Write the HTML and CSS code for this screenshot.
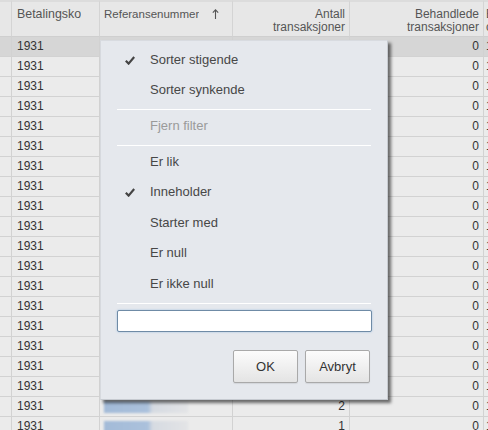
FILE: index.html
```html
<!DOCTYPE html>
<html>
<head>
<meta charset="utf-8">
<link rel="stylesheet" href="styles.css">
</head>
<body>
<div class="wrap">
<div class="grid">
  <div class="row head">
    <div class="h"></div>
    <div class="h left bet"><span class="ht">Betalingskode</span></div>
    <div class="h left ref"><span class="ht small">Referansenummer</span><svg class="arrow" width="7" height="10" viewBox="0 0 7 10"><path d="M3.5 1V10M0.8 3.6L3.5 0.8L6.2 3.6" fill="none" stroke="#555" stroke-width="1.1"/></svg></div>
    <div class="h right">Antall<br>transaksjoner</div>
    <div class="h right">Behandlede<br>transaksjoner</div>
    <div class="h last">Behandlede<br>oppgjør</div>
  </div>
  <div class="row sel"><div class="c"></div><div class="c">1931</div><div class="c"></div><div class="c num">1</div><div class="c num">0</div><div class="c last">1</div></div>
  <div class="row"><div class="c"></div><div class="c">1931</div><div class="c"></div><div class="c num">1</div><div class="c num">0</div><div class="c last">1</div></div>
  <div class="row"><div class="c"></div><div class="c">1931</div><div class="c"></div><div class="c num">1</div><div class="c num">0</div><div class="c last">1</div></div>
  <div class="row"><div class="c"></div><div class="c">1931</div><div class="c"></div><div class="c num">1</div><div class="c num">0</div><div class="c last">1</div></div>
  <div class="row"><div class="c"></div><div class="c">1931</div><div class="c"></div><div class="c num">1</div><div class="c num">0</div><div class="c last">1</div></div>
  <div class="row"><div class="c"></div><div class="c">1931</div><div class="c"></div><div class="c num">1</div><div class="c num">0</div><div class="c last">1</div></div>
  <div class="row"><div class="c"></div><div class="c">1931</div><div class="c"></div><div class="c num">1</div><div class="c num">0</div><div class="c last">1</div></div>
  <div class="row"><div class="c"></div><div class="c">1931</div><div class="c"></div><div class="c num">1</div><div class="c num">0</div><div class="c last">1</div></div>
  <div class="row"><div class="c"></div><div class="c">1931</div><div class="c"></div><div class="c num">1</div><div class="c num">0</div><div class="c last">1</div></div>
  <div class="row"><div class="c"></div><div class="c">1931</div><div class="c"></div><div class="c num">1</div><div class="c num">0</div><div class="c last">1</div></div>
  <div class="row"><div class="c"></div><div class="c">1931</div><div class="c"></div><div class="c num">1</div><div class="c num">0</div><div class="c last">1</div></div>
  <div class="row"><div class="c"></div><div class="c">1931</div><div class="c"></div><div class="c num">1</div><div class="c num">0</div><div class="c last">1</div></div>
  <div class="row"><div class="c"></div><div class="c">1931</div><div class="c"></div><div class="c num">1</div><div class="c num">0</div><div class="c last">1</div></div>
  <div class="row"><div class="c"></div><div class="c">1931</div><div class="c"></div><div class="c num">1</div><div class="c num">0</div><div class="c last">1</div></div>
  <div class="row"><div class="c"></div><div class="c">1931</div><div class="c"></div><div class="c num">1</div><div class="c num">0</div><div class="c last">1</div></div>
  <div class="row"><div class="c"></div><div class="c">1931</div><div class="c"></div><div class="c num">1</div><div class="c num">0</div><div class="c last">1</div></div>
  <div class="row"><div class="c"></div><div class="c">1931</div><div class="c"></div><div class="c num">1</div><div class="c num">0</div><div class="c last">1</div></div>
  <div class="row"><div class="c"></div><div class="c">1931</div><div class="c"></div><div class="c num">1</div><div class="c num">0</div><div class="c last">1</div></div>
  <div class="row"><div class="c"></div><div class="c">1931</div><div class="c"><span class="blur"></span></div><div class="c num">2</div><div class="c num">0</div><div class="c last">1</div></div>
  <div class="row"><div class="c"></div><div class="c">1931</div><div class="c"><span class="blur"></span></div><div class="c num">1</div><div class="c num">0</div><div class="c last">1</div></div>
</div>

<div class="popup">
  <div class="item"><span class="chk"><svg width="10" height="9" viewBox="0 0 10 9"><path d="M0.8 4.8L3.6 7.6L9.2 1" fill="none" stroke="#444" stroke-width="2.2"/></svg></span>Sorter stigende</div>
  <div class="item"><span class="chk"></span>Sorter synkende</div>
  <div class="sep"></div>
  <div class="item disabled"><span class="chk"></span>Fjern filter</div>
  <div class="sep"></div>
  <div class="item"><span class="chk"></span>Er lik</div>
  <div class="item"><span class="chk"><svg width="10" height="9" viewBox="0 0 10 9"><path d="M0.8 4.8L3.6 7.6L9.2 1" fill="none" stroke="#444" stroke-width="2.2"/></svg></span>Inneholder</div>
  <div class="item tall"><span class="chk"></span>Starter med</div>
  <div class="item"><span class="chk"></span>Er null</div>
  <div class="item tall"><span class="chk"></span>Er ikke null</div>
  <div class="sep last"></div>
  <input class="field" type="text">
  <div class="buttons">
    <button class="btn">OK</button>
    <button class="btn">Avbryt</button>
  </div>
</div>
</div>
</body>
</html>
```

FILE: styles.css
```css
html, body {
  margin: 0;
  padding: 0;
  background: #ebebeb;
  overflow: hidden;
}
body {
  font-family: "Liberation Sans", Arial, sans-serif;
  width: 488px;
  height: 430px;
}
.wrap {
  position: relative;
  width: 488px;
  height: 430px;
  overflow: hidden;
}
.grid {
  width: 564px;
  font-size: 12px;
  color: #333;
}
.row {
  display: grid;
  grid-template-columns: 12px 88px 133px 117px 134px 80px;
}
.h {
  height: 37px;
  box-sizing: border-box;
  padding: 6px 4px 0 5px;
  color: #555;
  background: #e7e7e7;
  border-right: 1px solid #d4d4d4;
  border-bottom: 1px solid #cfcfcf;
  border-top: 2px solid #dcdcdc;
  white-space: nowrap;
  overflow: hidden;
  line-height: 13px;
  display: flex;
  align-items: flex-start;
}
.h.left { padding-right: 16px; }
.h.bet { padding-right: 18px; }
.h.ref { padding-left: 4px; }
.h.right { text-align: right; justify-content: flex-end; }
.h.last { padding-left: 2px; }
.ht {
  overflow: hidden;
  white-space: nowrap;
  flex: none;
  max-width: 100%;
  font-size: 12.4px;
}
.ht.small { font-size: 11.5px; }
.arrow { flex: none; margin: 1px 0 0 13px; }
.c {
  height: 20px;
  box-sizing: border-box;
  padding: 0 4px 0 5px;
  border-right: 1px solid #d2d2d2;
  border-bottom: 1px solid #d2d2d2;
  background: #ebebeb;
  white-space: nowrap;
  overflow: hidden;
  line-height: 19px;
}
.c.num { text-align: right; }
.c.last { padding-left: 2px; }
.row.sel .c { background: #d6d6d6; }
.blur {
  display: inline-block;
  width: 84px;
  height: 12px;
  vertical-align: middle;
  margin-left: -1px;
  background: linear-gradient(90deg, #a3bbd8 0%, #abc1dc 52%, #d6dbe2 58%, #e3e4e6 100%);
  filter: blur(1.2px);
}

.popup {
  position: absolute;
  left: 100px;
  top: 40px;
  width: 288px;
  height: 360px;
  box-sizing: border-box;
  padding: 4px 16px 0 16px;
  background: #e5e8ed;
  border: 1px solid #c6cad0;
  border-top: 1px solid #d8dbe0;
  border-left: 1px solid #d6d9de;
  box-shadow: 3px 3px 3px rgba(0, 0, 0, 0.55);
  font-size: 13px;
  color: #474747;
}
.item {
  height: 30px;
  line-height: 30px;
  display: flex;
  align-items: center;
  white-space: nowrap;
}
.item.tall { height: 31px; }
.chk {
  width: 33px;
  flex: none;
  display: flex;
  align-items: center;
  padding-left: 8px;
  box-sizing: border-box;
}
.item.disabled { color: #9a9a9a; }
.sep {
  height: 1px;
  background: #ffffff;
  margin: 4px 0 1px 0;
}
.sep.last { margin-top: 4px; }
.field {
  display: block;
  box-sizing: border-box;
  width: 255px;
  height: 22px;
  margin: 6px 0 0 0;
  padding: 0;
  background: #ffffff;
  border: 1px solid #6f8ba6;
  border-radius: 2px;
  box-shadow: 0 0 2px rgba(120, 170, 220, 0.7);
  outline: none;
}
.buttons {
  display: flex;
  justify-content: flex-end;
  gap: 7px;
  margin-top: 18px;
  padding-right: 1px;
}
.btn {
  width: 65px;
  height: 33px;
  box-sizing: border-box;
  font-family: "Liberation Sans", Arial, sans-serif;
  font-size: 13px;
  color: #333;
  background: linear-gradient(#fcfcfc, #e4e4e4);
  border: 1px solid #a9a9a9;
  border-radius: 2px;
  box-shadow: 0 1px 1px rgba(0,0,0,0.08);
  padding: 0;
}
```
